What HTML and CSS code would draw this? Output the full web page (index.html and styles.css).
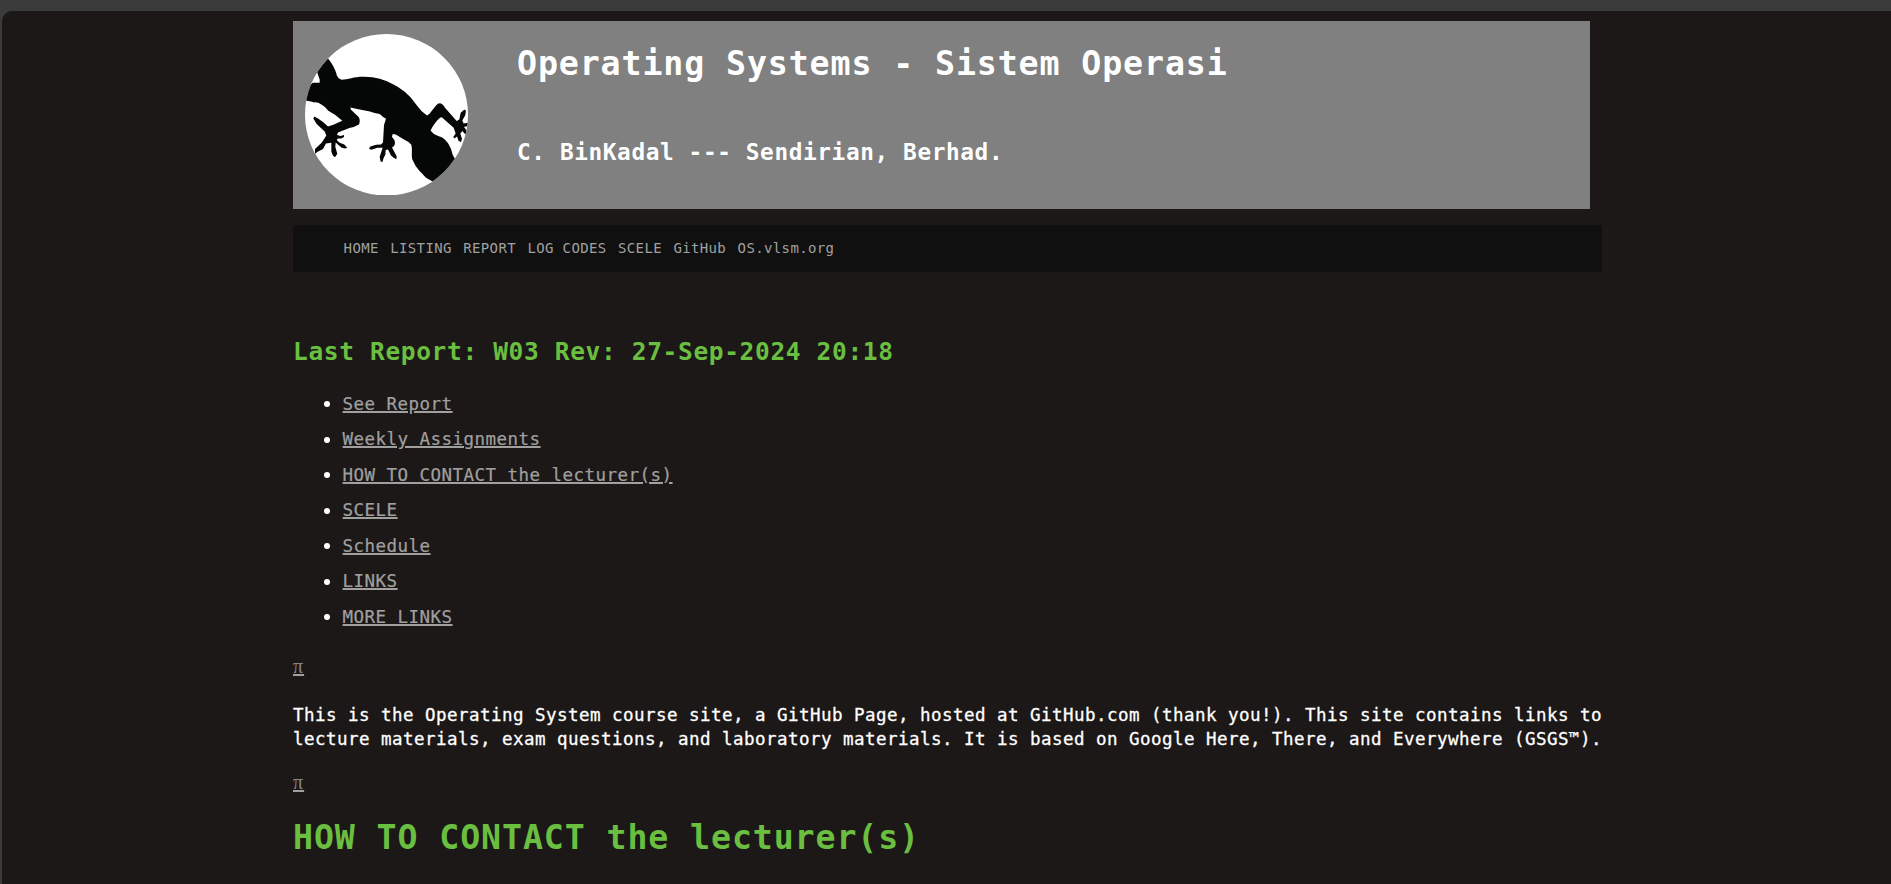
FILE: index.html
```
<!DOCTYPE html>
<html lang="en">
<head>
<meta charset="utf-8">
<title>Operating Systems - Sistem Operasi</title>
<link rel="stylesheet" href="styles.css">
</head>
<body>
<div class="page">
  <main class="content">
    <header class="banner">
      <svg class="logo" viewBox="75 71 489 484" preserveAspectRatio="none" aria-hidden="true">
        <defs><clipPath id="disc"><ellipse cx="319.5" cy="313" rx="244.5" ry="242"/></clipPath></defs>
        <ellipse cx="319.5" cy="313" rx="244.5" ry="242" fill="#fff"/>
        <g clip-path="url(#disc)" fill="#050706">
          <path d="M143 143C157 160 166 177 171 196Q175 206 184 208C205 207 222 199 248 199C282 198 313 206 342 223C376 241 394 261 412 287Q424 305 441 315Q449 312 455 302L468 285Q475 277 483 279Q490 281 495 292L530 332L538 327L542 307L553 297L558 301L556 314L547 330L551 339L570 336L570 347L552 349L563 366L562 374L555 371L547 362L541 369L546 386L543 395L536 392L531 378L523 384L520 379L527 369L521 352L487 322Q484 319 480 322C469 331 456 350 452 361Q459 371 473 376C488 381 497 387 505 400Q515 415 518 433L524 444L580 480L520 560L459 514L438 502Q428 491 418 481Q405 466 397 447C393 433 398 420 394 403Q388 394 372 387L347 372L338 371L336 380Q344 387 345 397Q344 408 336 411L350 437L349 446L341 442L333 435L324 417L317 419L316 432L310 445L308 454L302 454L299 439L308 412L292 412L274 418L267 415L271 408L289 403L303 402L309 396L312 344L318 325Q309 321 299 311Q283 308 270 303L239 297L211 291L213 298L236 320Q242 329 237 342Q225 349 208 353L174 366L171 374L182 377L192 374L192 380L184 384L174 384L170 389L179 397L193 402L202 413L194 414L184 411L167 396L166 410L172 430L165 440L159 436L154 424L154 397L138 399L129 416L112 425L105 430L105 416L125 397L139 375L134 363L110 341L100 324L103 318L114 324L131 336L144 348L160 343L187 331L166 314L145 301Q134 287 124 282Q114 275 103 276L93 273L70 270L80 235L98 217H119V207L111 184Z"/>
        </g>
      </svg>
      <div class="banner-text">
        <h1 class="site-title">Operating Systems - Sistem Operasi</h1>
        <h2 class="site-owner">C. BinKadal --- Sendirian, Berhad.</h2>
      </div>
    </header>
    <nav class="menu">
      <a href="#">HOME</a><a href="#">LISTING</a><a href="#">REPORT</a><a href="#">LOG CODES</a><a href="#">SCELE</a><a href="#">GitHub</a><a href="#">OS.vlsm.org</a>
    </nav>
    <h2 class="report">Last Report: W03 Rev: 27-Sep-2024 20:18</h2>
    <ul class="links">
      <li><a href="#">See Report</a></li>
      <li><a href="#">Weekly Assignments</a></li>
      <li><a href="#contact">HOW TO CONTACT the lecturer(s)</a></li>
      <li><a href="#">SCELE</a></li>
      <li><a href="#">Schedule</a></li>
      <li><a href="#">LINKS</a></li>
      <li><a href="#">MORE LINKS</a></li>
    </ul>
    <div class="pi"><a href="#">π</a></div>
    <p class="intro">This is the Operating System course site, a GitHub Page, hosted at GitHub.com (thank you!). This site contains links to<br>lecture materials, exam questions, and laboratory materials. It is based on Google Here, There, and Everywhere (GSGS™).</p>
    <div class="pi"><a href="#">π</a></div>
    <h1 class="contact" id="contact">HOW TO CONTACT the lecturer(s)</h1>
  </main>
</div>
</body>
</html>
```
FILE: styles.css
```
* { box-sizing: border-box; }
html, body { height: 100%; margin: 0; }
body {
  background: #3b3b3b;
  padding: 11px 0 0 2px;
  overflow: hidden;
  font-family: "DejaVu Sans Mono", monospace;
  font-size: 17.5px;
  letter-spacing: 0.464px;
  color: #fff;
}
h1, h2, p, ul { margin: 0; padding: 0; }
.page {
  height: 873px;
  overflow: hidden;
  background: #1c1817;
  border-top-left-radius: 10px;
}
.content { width: 1310px; margin-left: 291px; padding-top: 10px; }
.banner {
  display: flex;
  gap: 49px;
  width: 1297px;
  height: 188px;
  padding: 12.5px 12px;
  background: #808080;
}
.logo { width: 163px; height: 161.5px; flex: none; }
.banner-text { padding-top: 8px; }
.site-title, .contact {
  font-size: 33.25px;
  line-height: 44px;
  letter-spacing: 0.882px;
  white-space: nowrap;
}
.site-owner {
  margin-top: 51px;
  font-size: 22.75px;
  line-height: 30px;
  letter-spacing: 0.603px;
}
.menu {
  display: flex;
  align-items: center;
  gap: 11.4px;
  width: 1309px;
  height: 47px;
  margin-top: 16px;
  padding: 0 50.6px 2px;
  background: #101010;
  font-size: 14px;
  line-height: 20px;
  letter-spacing: 0.371px;
}
.menu a { color: #a0a0a0; text-decoration: none; }
.report {
  margin-top: 64px;
  font-size: 24.5px;
  line-height: 32px;
  letter-spacing: 0.65px;
  color: #6abf40;
}
.links { margin-top: 18.6px; list-style: none; line-height: 35.5px; }
.links li { display: flex; align-items: center; padding-left: 31px; }
.links li::before {
  content: "";
  width: 6px;
  height: 6px;
  margin-right: 12.6px;
  border-radius: 50%;
  background: #fff;
}
.links a {
  color: #a0a0a0;
  text-decoration-thickness: 2px;
  text-underline-offset: 1px;
  -webkit-text-stroke: 0.2px #a0a0a0;
}
.pi {
  height: 24px;
  margin-top: 18.9px;
  font-family: "Liberation Serif", serif;
  font-size: 20px;
  line-height: 24px;
  letter-spacing: 1px;
}
.pi a { color: #858585; text-decoration: underline 2px #a0a0a0; text-underline-offset: 1px; }
.intro {
  margin-top: 25px;
  line-height: 24px;
  white-space: nowrap;
  -webkit-text-stroke: 0.3px #fff;
}
.contact { margin-top: 22.5px; color: #6abf40; }
```
